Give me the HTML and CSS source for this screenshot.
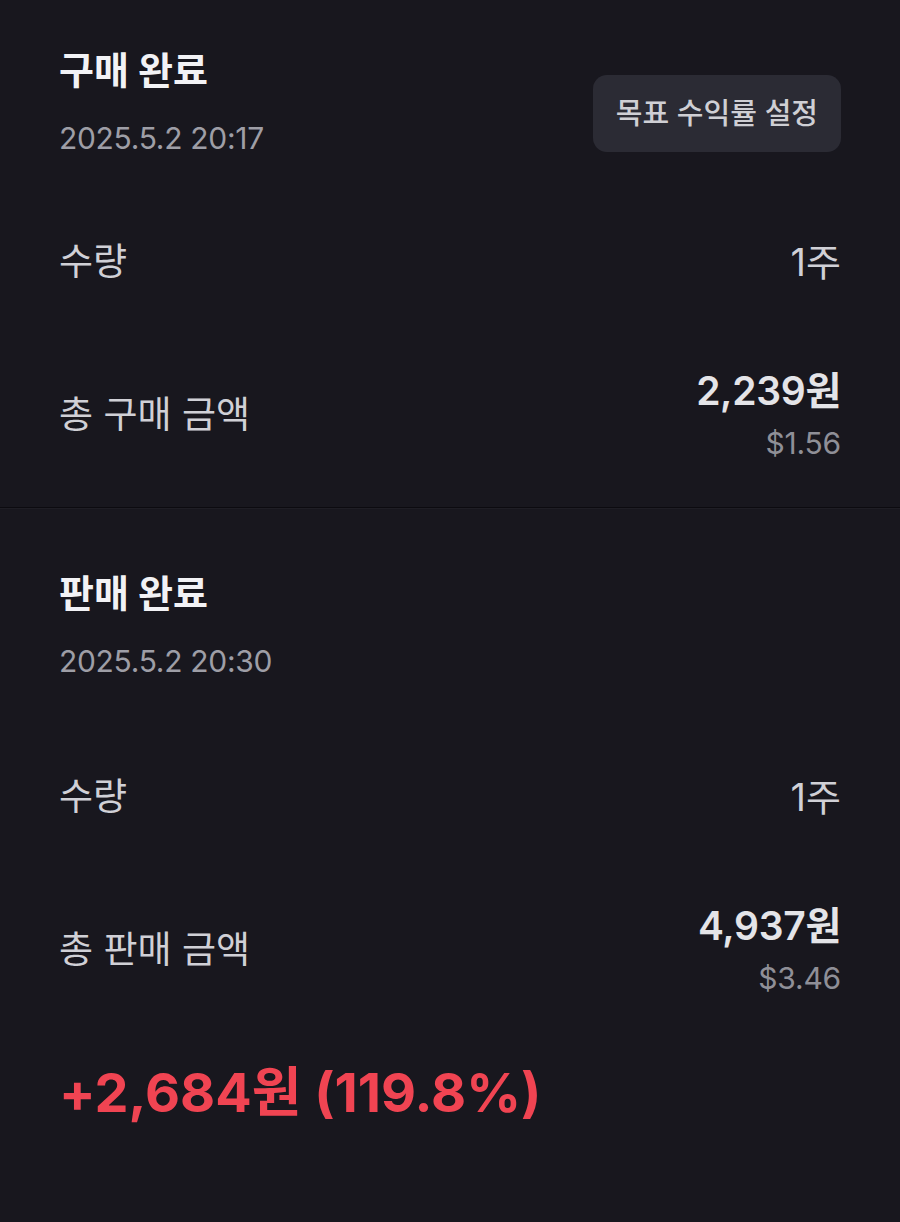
FILE: index.html
```html
<!DOCTYPE html>
<html lang="ko">
<head>
    <meta charset="UTF-8">
    <meta name="viewport" content="width=device-width, initial-scale=1.0">
    <title>거래 내역</title>
    <link rel="stylesheet" href="styles.css">
</head>
<body>
    <div class="section buy">
        <div class="head">
            <div class="head_txt">
                <h2 class="title">구매 완료</h2>
                <p class="date">2025.5.2 20:17</p>
            </div>
            <a class="btn_goal">목표 수익률 설정</a>
        </div>

        <div class="row row_qty">
            <span class="label">수량</span>
            <span class="val">1주</span>
        </div>

        <div class="row row_total">
            <span class="label">총 구매 금액</span>
            <div class="amount">
                <div class="krw">2,239원</div>
                <div class="usd">$1.56</div>
            </div>
        </div>
    </div>

    <div class="section sell">
        <div class="head">
            <div class="head_txt">
                <h2 class="title">판매 완료</h2>
                <p class="date">2025.5.2 20:30</p>
            </div>
        </div>

        <div class="row row_qty">
            <span class="label">수량</span>
            <span class="val">1주</span>
        </div>

        <div class="row row_total">
            <span class="label">총 판매 금액</span>
            <div class="amount">
                <div class="krw">4,937원</div>
                <div class="usd">$3.46</div>
            </div>
        </div>

        <div class="profit">+2,684원 (119.8%)</div>
    </div>
</body>
</html>
```

FILE: styles.css
```css
*{margin: 0;padding: 0;box-sizing: border-box;}
html,body{background: #18171e;}
body{font-family: Inter, "Noto Sans CJK KR", sans-serif;color: #d4d4da;width: 900px;min-height: 1222px;}
a{outline: none;cursor: pointer;}

.section{padding: 46px 59px 46px 59px;}
.section.buy{border-bottom: 1px solid #0c0b10;box-shadow: 0 1px 0 #1f1e25;}
.section.sell{padding-top: 61px;}

.head{display: flex;justify-content: space-between;align-items: flex-start;}
.title{font-size: 38px;line-height: 48px;font-weight: 700;color: #f2f2f5;}
.date{margin-top: 24px;font-size: 30px;line-height: 40px;color: #9e9ea6;letter-spacing: -0.3px;}
.btn_goal{display: block;margin-top: 29px;padding: 0 23px;height: 77px;line-height: 77px;border-radius: 14px;background: #2b2b34;color: #cfcfd4;font-size: 29px;font-weight: 500;}

.row{display: flex;justify-content: space-between;align-items: center;}
.row_qty{margin-top: 84px;line-height: 40px;}
.sell .row_qty{margin-top: 96px;}
.row_total{margin-top: 87px;}
.label{font-size: 37px;line-height: 40px;color: #d0d0d6;}
.val{font-size: 38px;line-height: 40px;color: #d0d0d6;}

.amount{text-align: right;}
.krw{font-size: 39px;line-height: 44px;font-weight: 600;color: #e4e4e8;letter-spacing: -0.3px;}
.usd{margin-top: 12px;font-size: 30px;line-height: 36px;color: #8f8f97;letter-spacing: -0.2px;}

.profit{margin-top: 67px;font-size: 54px;line-height: 60px;font-weight: 700;color: #f04452;}
```
